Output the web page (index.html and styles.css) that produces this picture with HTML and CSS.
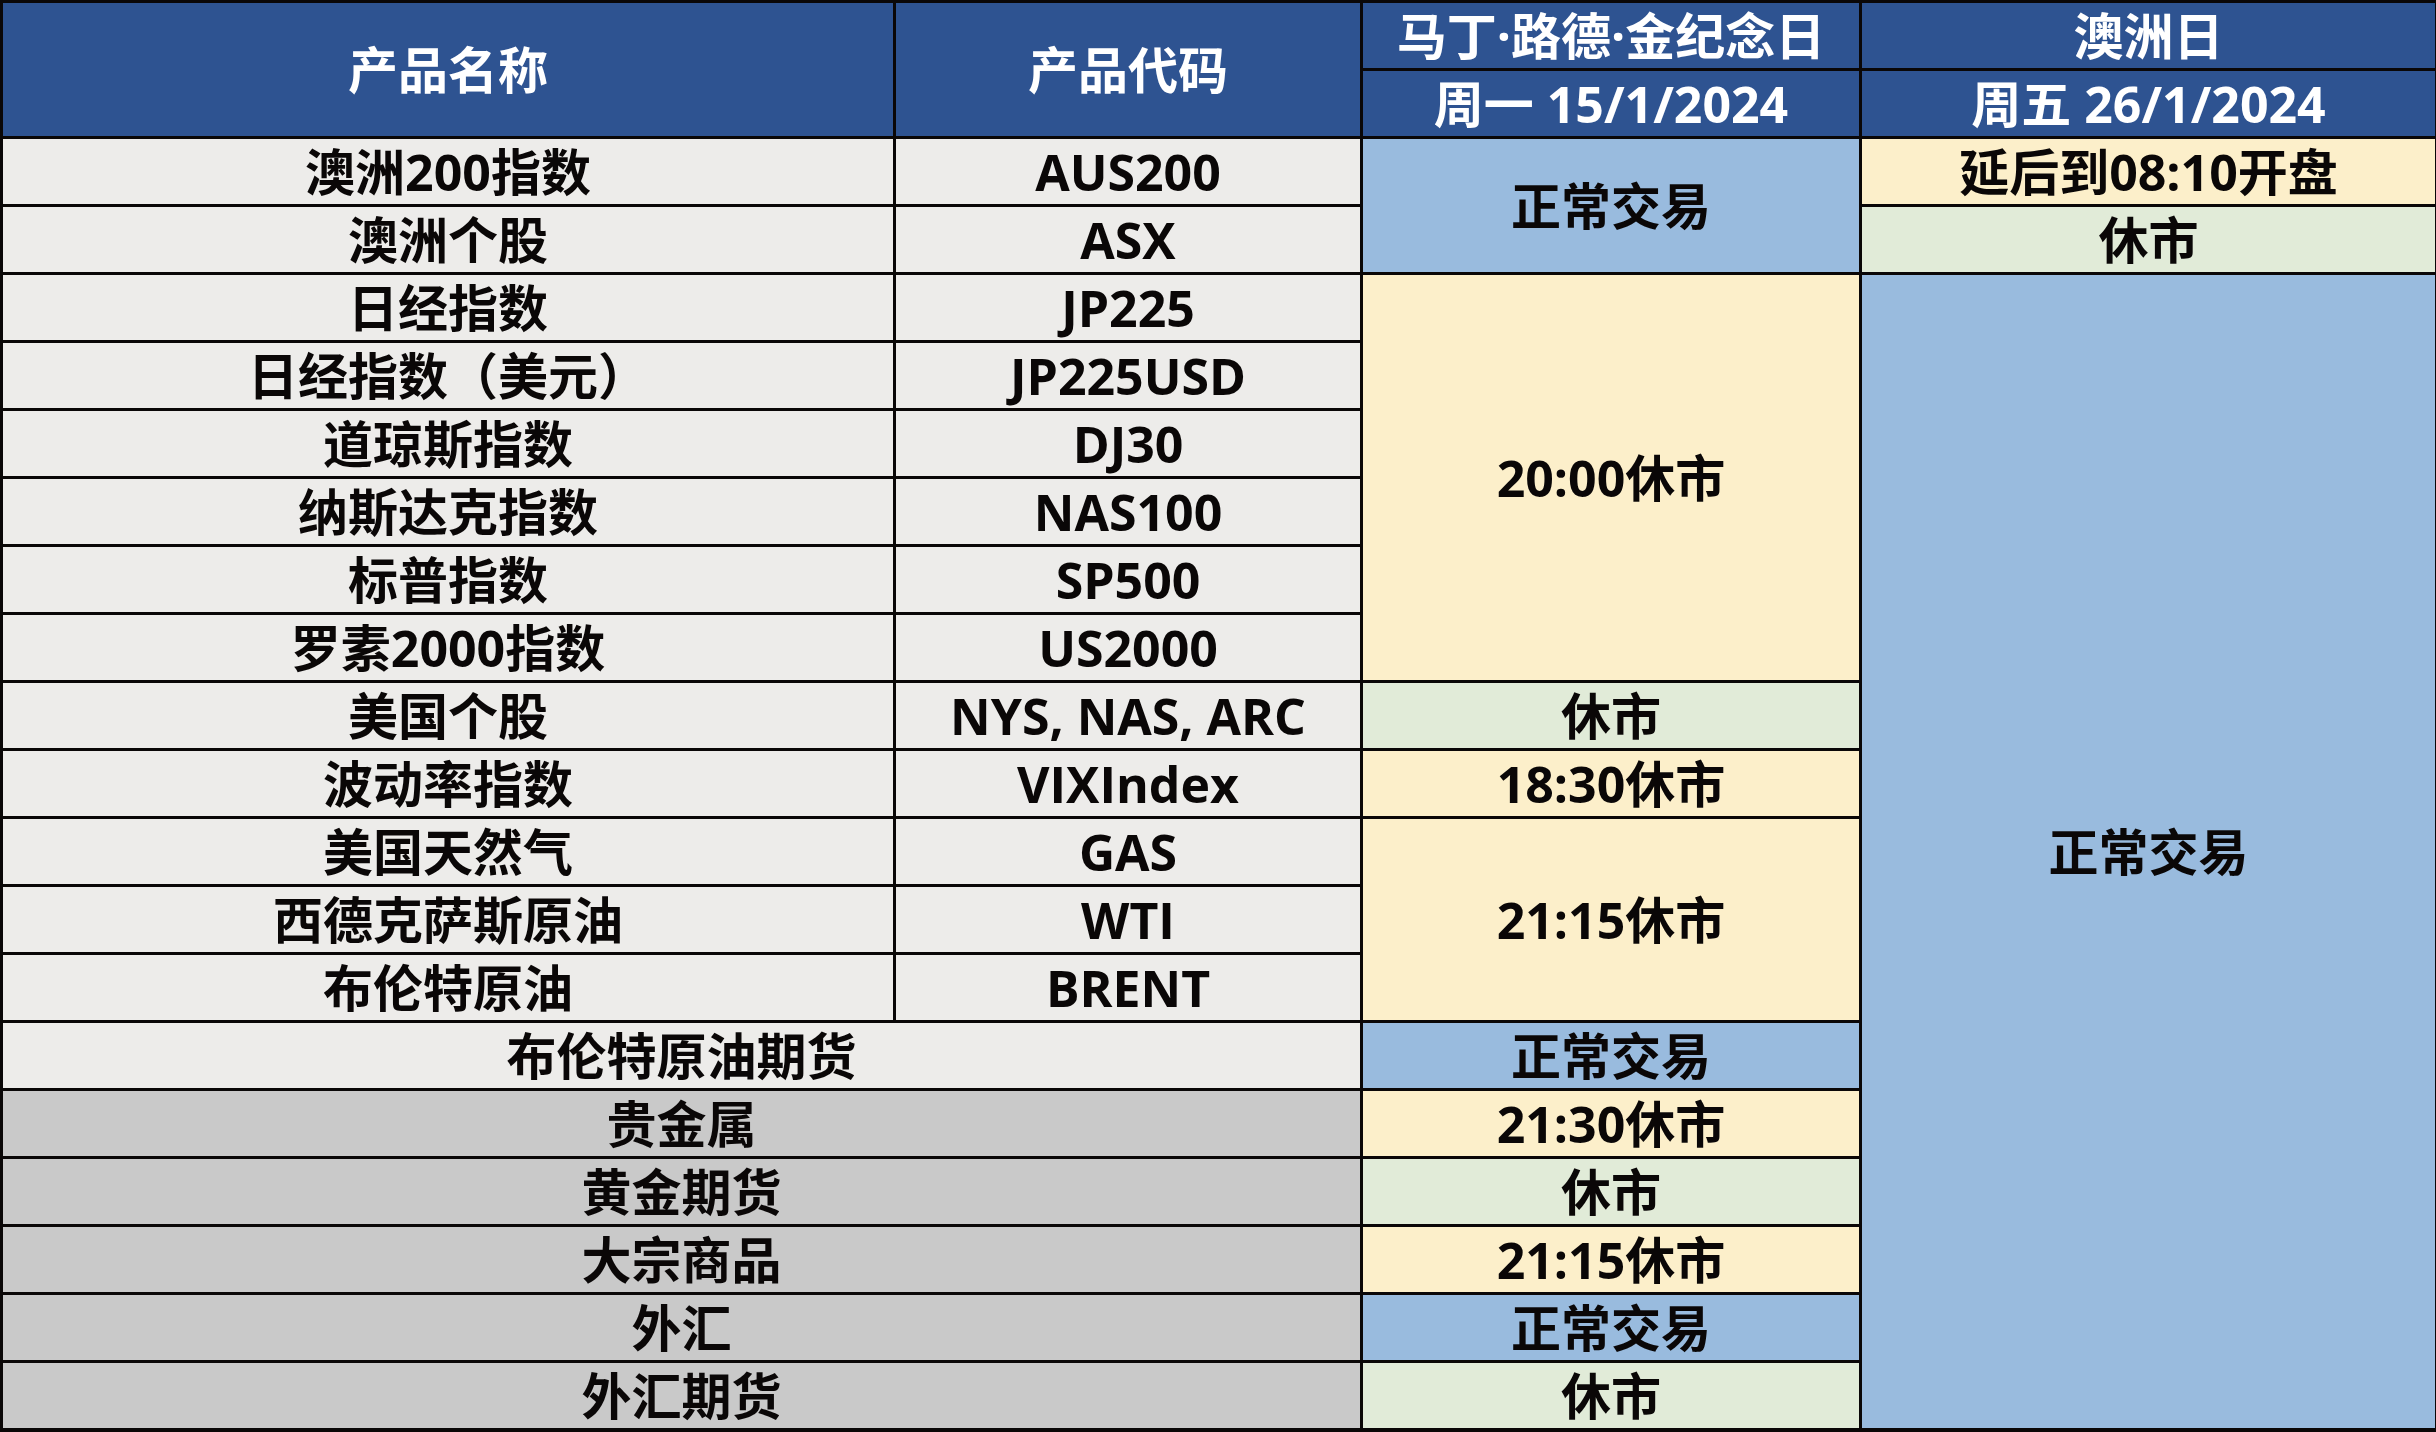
FILE: index.html
```html
<!DOCTYPE html>
<html lang="zh">
<head>
<meta charset="utf-8">
<title>假期交易时间</title>
<link rel="stylesheet" href="styles.css">
</head>
<body>
<table class="sched">
  <colgroup>
    <col class="c-name">
    <col class="c-code">
    <col class="c-d1">
    <col class="c-d2">
  </colgroup>
  <thead>
    <tr>
      <th rowspan="2">产品名称</th>
      <th rowspan="2">产品代码</th>
      <th>马丁·路德·金纪念日</th>
      <th>澳洲日</th>
    </tr>
    <tr>
      <th>周一 15/1/2024</th>
      <th>周五 26/1/2024</th>
    </tr>
  </thead>
  <tbody>
    <tr>
      <td class="lt">澳洲200指数</td><td class="lt">AUS200</td>
      <td class="bl" rowspan="2">正常交易</td>
      <td class="ye">延后到08:10开盘</td>
    </tr>
    <tr>
      <td class="lt">澳洲个股</td><td class="lt">ASX</td>
      <td class="gr">休市</td>
    </tr>
    <tr>
      <td class="lt">日经指数</td><td class="lt">JP225</td>
      <td class="ye" rowspan="6">20:00休市</td>
      <td class="bl" rowspan="17">正常交易</td>
    </tr>
    <tr><td class="lt">日经指数（美元）</td><td class="lt">JP225USD</td></tr>
    <tr><td class="lt">道琼斯指数</td><td class="lt">DJ30</td></tr>
    <tr><td class="lt">纳斯达克指数</td><td class="lt">NAS100</td></tr>
    <tr><td class="lt">标普指数</td><td class="lt">SP500</td></tr>
    <tr><td class="lt">罗素2000指数</td><td class="lt">US2000</td></tr>
    <tr><td class="lt">美国个股</td><td class="lt">NYS, NAS, ARC</td><td class="gr">休市</td></tr>
    <tr><td class="lt">波动率指数</td><td class="lt">VIXIndex</td><td class="ye">18:30休市</td></tr>
    <tr><td class="lt">美国天然气</td><td class="lt">GAS</td><td class="ye" rowspan="3">21:15休市</td></tr>
    <tr><td class="lt">西德克萨斯原油</td><td class="lt">WTI</td></tr>
    <tr><td class="lt">布伦特原油</td><td class="lt">BRENT</td></tr>
    <tr><td class="lt" colspan="2">布伦特原油期货</td><td class="bl">正常交易</td></tr>
    <tr><td class="dk" colspan="2">贵金属</td><td class="ye">21:30休市</td></tr>
    <tr><td class="dk" colspan="2">黄金期货</td><td class="gr">休市</td></tr>
    <tr><td class="dk" colspan="2">大宗商品</td><td class="ye">21:15休市</td></tr>
    <tr><td class="dk" colspan="2">外汇</td><td class="bl">正常交易</td></tr>
    <tr><td class="dk" colspan="2">外汇期货</td><td class="gr">休市</td></tr>
  </tbody>
</table>
</body>
</html>
```
FILE: styles.css
```css
html, body {
  margin: 0;
  padding: 0;
  background: #ffffff;
}

.sched {
  width: 2436px;
  height: 1432px;
  border-collapse: collapse;
  table-layout: fixed;
  font-family: "Open Sans", "Noto Sans CJK SC", sans-serif;
  font-weight: 700;
  font-size: 50px;
  color: #0a0707;
  border-top: 2px solid #2a2a2a;
  border-left: 3px solid #0a0707;
  border-right: 5px solid #0a0707;
  border-bottom: 4px solid #0a0707;
}

.c-name { width: 893px; }
.c-code { width: 467px; }
.c-d1 { width: 499px; }
.c-d2 { width: 577px; }

.sched tr {
  height: 68px;
}

.sched th,
.sched td {
  border: 3px solid #0a0707;
  padding: 0;
  text-align: center;
  vertical-align: middle;
  line-height: 1;
  white-space: nowrap;
}

.sched th {
  background: #2e5391;
  color: #ffffff;
  font-weight: 700;
}

.lt { background: #edecea; }
.dk { background: #c9c9c9; }
.bl { background: #99bbde; }
.ye { background: #fcefca; }
.gr { background: #e1ebd8; }
```
